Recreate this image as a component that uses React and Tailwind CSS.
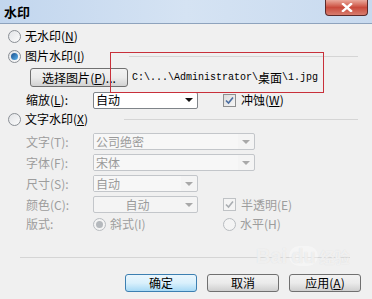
import React from "react";

const font = { fontFamily: '"Noto Sans CJK SC", "Liberation Sans", sans-serif' };

const Radio = ({ checked, disabled }) => (
  <span
    className={`flex h-[13px] w-[13px] shrink-0 items-center justify-center rounded-full border ${
      disabled ? "border-[#b8bcc0] bg-[#f4f4f4]" : "border-[#8a8f95] bg-gradient-to-br from-[#e2e4e7] to-[#fbfbfb]"
    }`}
  >
    {checked && (
      <span
        className={`h-[7px] w-[7px] rounded-full ${
          disabled ? "bg-[#b5b9bd]" : "bg-gradient-to-br from-[#1c4f8a] to-[#5cb4f0]"
        }`}
      />
    )}
  </span>
);

const Check = ({ disabled }) => (
  <span
    className={`flex h-[13px] w-[13px] shrink-0 items-center justify-center border ${
      disabled ? "border-[#bfc2c5] bg-[#f4f4f4]" : "border-[#8e8f8f] bg-gradient-to-br from-[#dcdcdc] to-[#f6f6f6]"
    }`}
  >
    <svg width="9" height="9" viewBox="0 0 9 9">
      <path
        d="M1 4.5 L3.5 7 L8 1.5"
        fill="none"
        stroke={disabled ? "#a9adb1" : "#4a6da0"}
        strokeWidth="1.6"
      />
    </svg>
  </span>
);

const Mn = ({ k }) => (
  <span>
    (<u className="underline-offset-1">{k}</u>)
  </span>
);

const Arrow = ({ disabled }) => (
  <svg width="8" height="4" viewBox="0 0 8 4">
    <path d="M0 0 H8 L4 4 Z" fill={disabled ? "#a8a8a8" : "#111"} />
  </svg>
);

const Combo = ({ text, w, disabled, center }) => (
  <div
    className={`flex h-[17px] items-center rounded-[2px] border ${
      disabled ? "border-[#c3c6ca] bg-[#f4f4f4] text-[#9a9a9a]" : "border-[#7f8489] bg-white text-black"
    } ${w}`}
  >
    <span
      className={`flex h-full flex-1 items-center px-[2px] ${center ? "justify-center" : ""} ${
        disabled && !center ? "bg-[#f7f7f7]" : ""
      }`}
    >
      {text}
    </span>
    <span className="flex w-[16px] items-center justify-center">
      <Arrow disabled={disabled} />
    </span>
  </div>
);

const Sep = ({ className }) => <div className={`h-[2px] border-t border-[#d5d5d5] border-b-white ${className}`} />;

const Btn = ({ children, def }) => (
  <button
    className={`flex h-[18px] w-[72px] items-center justify-center rounded-[3px] border text-[12px] text-black ${
      def
        ? "border-[#3c7fb1] bg-gradient-to-b from-[#eaf6fd] via-[#d9f0fc] to-[#a7d9f5]"
        : "border-[#707070] bg-gradient-to-b from-[#f2f2f2] via-[#ebebeb] to-[#cfcfcf]"
    }`}
  >
    {children}
  </button>
);

export default function App() {
  return (
    <div className="relative h-[299px] w-[372px] overflow-hidden bg-[#f0f0f0] text-[12px] leading-none" style={font}>
      {/* Title bar */}
      <div className="flex h-[24px] items-center justify-between border-b border-[#8ea3bd] bg-gradient-to-r from-[#c2d6ee] via-[#d5e3f3] to-[#c8daef] pl-[4px] pr-[4px]">
        <span className="text-[13px] font-bold text-black">水印</span>
        <div className="mb-[8px] flex h-[16px] w-[43px] items-center justify-center self-start rounded-b-[4px] border border-t-0 border-[#5b2a2a] bg-gradient-to-b from-[#e9a99d] via-[#c94a3c] to-[#d77d6f]">
          <svg width="12" height="9" viewBox="0 0 12 9">
            <path d="M2 1 L10 8 M10 1 L2 8" stroke="#fff" strokeWidth="2.4" strokeLinecap="square" />
          </svg>
        </div>
      </div>

      {/* Body */}
      <div className="flex flex-col pl-[8px] pt-[2px]">
        <label className="flex h-[20px] items-center gap-[4px]">
          <Radio />
          <span>
            无水印<Mn k="N" />
          </span>
        </label>
        <label className="flex h-[20px] items-center gap-[4px]">
          <Radio checked />
          <span>
            图片水印<Mn k="I" />
          </span>
          <Sep className="ml-[40px] mr-[14px] mt-[2px] flex-1" />
        </label>

        <div className="mt-[2px] flex h-[19px] items-center pl-[22px]">
          <button className="flex h-[19px] w-[98px] items-center justify-center rounded-[3px] border border-[#707070] bg-gradient-to-b from-[#f2f2f2] via-[#ebebeb] to-[#d2d2d2]">
            选择图片<Mn k="P" />...
          </button>
          <span className="ml-[4px] flex items-center text-[10px]" style={{ fontFamily: '"Liberation Mono", monospace' }}>
            C:\...\Administrator\
            <span className="text-[12px]" style={font}>
              桌面
            </span>
            \1.jpg
          </span>
        </div>

        <div className="mt-[4px] flex h-[18px] items-center">
          <span className="w-[85px] pl-[18px]">
            缩放<Mn k="L" />:
          </span>
          <Combo text="自动" w="w-[105px]" />
          <span className="ml-[25px] flex items-center gap-[5px]">
            <Check />
            <span>
              冲蚀<Mn k="W" />
            </span>
          </span>
        </div>

        <label className="flex h-[20px] items-center gap-[4px]">
          <Radio />
          <span>
            文字水印<Mn k="X" />
          </span>
          <Sep className="ml-[32px] mr-[14px] mt-[2px] flex-1" />
        </label>

        <div className="flex flex-col gap-[4px] pt-[4px] text-[#9d9d9d]">
          <div className="flex h-[17px] items-center">
            <span className="w-[85px] pl-[18px]">文字(T):</span>
            <Combo text="公司绝密" w="w-[162px]" disabled />
          </div>
          <div className="flex h-[17px] items-center">
            <span className="w-[85px] pl-[18px]">字体(F):</span>
            <Combo text="宋体" w="w-[162px]" disabled />
          </div>
          <div className="flex h-[17px] items-center">
            <span className="w-[85px] pl-[18px]">尺寸(S):</span>
            <Combo text="自动" w="w-[105px]" disabled />
          </div>
          <div className="flex h-[17px] items-center">
            <span className="w-[85px] pl-[18px]">颜色(C):</span>
            <Combo text="自动" w="w-[105px]" disabled center />
            <span className="ml-[25px] flex items-center gap-[5px]">
              <Check disabled />
              <span>半透明(E)</span>
            </span>
          </div>
        </div>

        <div className="flex h-[22px] items-center text-[#9d9d9d]">
          <span className="w-[85px] pl-[18px]">版式:</span>
          <span className="flex w-[130px] items-center gap-[4px]">
            <Radio checked disabled />
            斜式(I)
          </span>
          <span className="flex items-center gap-[4px]">
            <Radio disabled />
            水平(H)
          </span>
        </div>

        <Sep className="ml-[12px] mr-[22px] mt-[22px]" />

        <div className="mt-[15px] flex justify-end gap-[10px] pr-[11px]">
          <Btn def>确定</Btn>
          <Btn>取消</Btn>
          <Btn>
            应用<Mn k="A" />
          </Btn>
        </div>
      </div>

      {/* Red annotation box */}
      <div className="pointer-events-none absolute left-[110px] top-[52px] h-[41px] w-[214px] border border-[#c8303a]" />

      {/* Baidu watermark */}
      <div
        className="pointer-events-none absolute left-[256px] top-[246px] flex items-center gap-[2px] text-[20px] font-bold text-white/60 [text-shadow:0_0_1px_#d8d8d8]"
        style={{ fontFamily: '"Liberation Sans", sans-serif' }}
      >
        <span>Bai</span>
        <span className="rounded-full bg-white/35 px-[2px]">du</span>
        <span className="text-[15px]" style={font}>
          经验
        </span>
      </div>
    </div>
  );
}
